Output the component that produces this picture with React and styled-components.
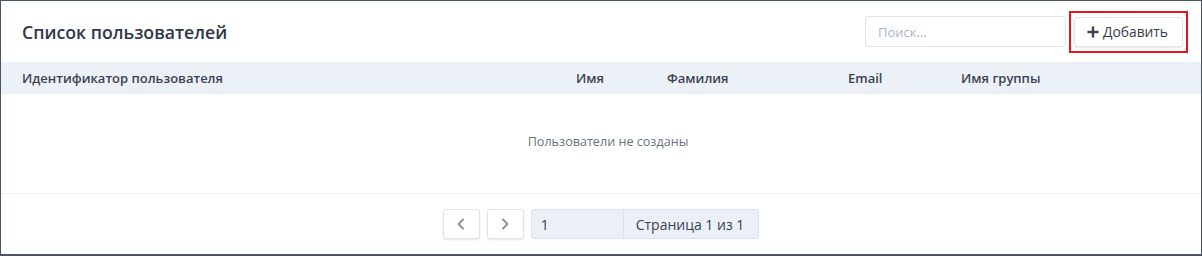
import React from 'react'
import styled, { createGlobalStyle } from 'styled-components'

const GlobalStyle = createGlobalStyle`
  html, body {
    margin: 0;
    padding: 0;
    background: #ffffff;
  }
  body {
    font-family: "Open Sans", "Noto Sans", sans-serif;
  }
`;

const Frame = styled.div`
  box-sizing: border-box;
  width: 1202px;
  height: 256px;
  border: 1px solid #4b5563;
  border-bottom-width: 2px;
  background: #fff;
  display: flex;
  flex-direction: column;
`;

const Toolbar = styled.div`
  display: flex;
  align-items: center;
  height: 61px;
  padding: 0 13px 0 21px;
  box-sizing: border-box;
`;

const Title = styled.h1`
  flex: 1;
  margin: 0;
  font-size: 17.7px;
  font-weight: 600;
  color: #2f3747;
`;

const SearchInput = styled.input`
  box-sizing: border-box;
  width: 201px;
  height: 31px;
  margin-right: 3px;
  border: 1px solid #dde3ec;
  border-radius: 3px;
  padding: 0 12px;
  font-family: inherit;
  font-size: 13px;
  color: #2f3747;
  outline: none;
  &::placeholder {
    color: #aab5c7;
  }
`;

const Highlight = styled.div`
  border: 2px solid #e8141b;
  padding: 4px 3px;
  display: flex;
`;

const AddButton = styled.button`
  box-sizing: border-box;
  width: 109px;
  height: 30px;
  display: flex;
  align-items: center;
  justify-content: center;
  gap: 4px;
  background: #fff;
  border: 1px solid #dfe4eb;
  border-radius: 3px;
  box-shadow: 0 1px 2px rgba(30, 40, 60, 0.12);
  font-family: inherit;
  font-size: 13.8px;
  color: #353d4c;
  padding: 0 8px 0 6px;
`;

const HeaderRow = styled.div`
  display: grid;
  grid-template-columns: 554px 91px 181px 113px 1fr;
  height: 32px;
  align-items: center;
  background: #ecf0f7;
`;

const HeaderCell = styled.div`
  padding-left: 21px;
  font-size: 13px;
  font-weight: 600;
  color: #3a4252;
`;

const EmptyBody = styled.div`
  height: 100px;
  display: flex;
  align-items: center;
  justify-content: center;
  font-size: 12.6px;
  color: #6a7280;
  border-bottom: 1px solid #edf0f4;
  padding: 0 0 4px 14px;
  box-sizing: border-box;
`;

const Pager = styled.div`
  flex: 1;
  display: flex;
  align-items: center;
  justify-content: center;
  gap: 7px;
`;

const PageButton = styled.button`
  box-sizing: border-box;
  width: 37px;
  height: 30px;
  display: flex;
  align-items: center;
  justify-content: center;
  background: #fff;
  border: 1px solid #e0e4ea;
  border-radius: 3px;
  box-shadow: 0 1px 2px rgba(30, 40, 60, 0.12);
  padding: 0;
  color: #8a93a2;
`;

const PageGroup = styled.div`
  display: flex;
  height: 30px;
  box-sizing: border-box;
  border: 1px solid #d9e1ed;
  border-radius: 3px;
  background: #ebf0f8;
  font-size: 14px;
  color: #3a4252;
`;

const PageInput = styled.div`
  width: 82px;
  padding-left: 9px;
  display: flex;
  align-items: center;
  border-right: 1px solid #d9e1ed;
`;

const PageInfo = styled.div`
  padding: 0 14px 0 12px;
  display: flex;
  align-items: center;
`;

const Chevron = ({ dir }) => (
  <svg width="14" height="14" viewBox="0 0 14 14" fill="none">
    <path
      d={dir === 'left' ? 'M9 2.5 L4.5 7 L9 11.5' : 'M5 2.5 L9.5 7 L5 11.5'}
      stroke="currentColor"
      strokeWidth="2"
      strokeLinecap="round"
      strokeLinejoin="round"
    />
  </svg>
);

const Plus = () => (
  <svg width="12" height="12" viewBox="0 0 12 12">
    <path d="M6 0.5 V11.5 M0.5 6 H11.5" stroke="#3a4252" strokeWidth="2.4" />
  </svg>
);

const columns = [
  'Идентификатор пользователя',
  'Имя',
  'Фамилия',
  'Email',
  'Имя группы',
];

export default function App() {
  return (
    <>
      <GlobalStyle />
      <Frame>
        <Toolbar>
          <Title>Список пользователей</Title>
          <SearchInput placeholder="Поиск..." />
          <Highlight>
            <AddButton>
              <Plus />
              Добавить
            </AddButton>
          </Highlight>
        </Toolbar>
        <HeaderRow>
          {columns.map(label => (
            <HeaderCell key={label}>{label}</HeaderCell>
          ))}
        </HeaderRow>
        <EmptyBody>Пользователи не созданы</EmptyBody>
        <Pager>
          <PageButton><Chevron dir="left" /></PageButton>
          <PageButton><Chevron dir="right" /></PageButton>
          <PageGroup>
            <PageInput>1</PageInput>
            <PageInfo>Страница 1 из 1</PageInfo>
          </PageGroup>
        </Pager>
      </Frame>
    </>
  );
}
